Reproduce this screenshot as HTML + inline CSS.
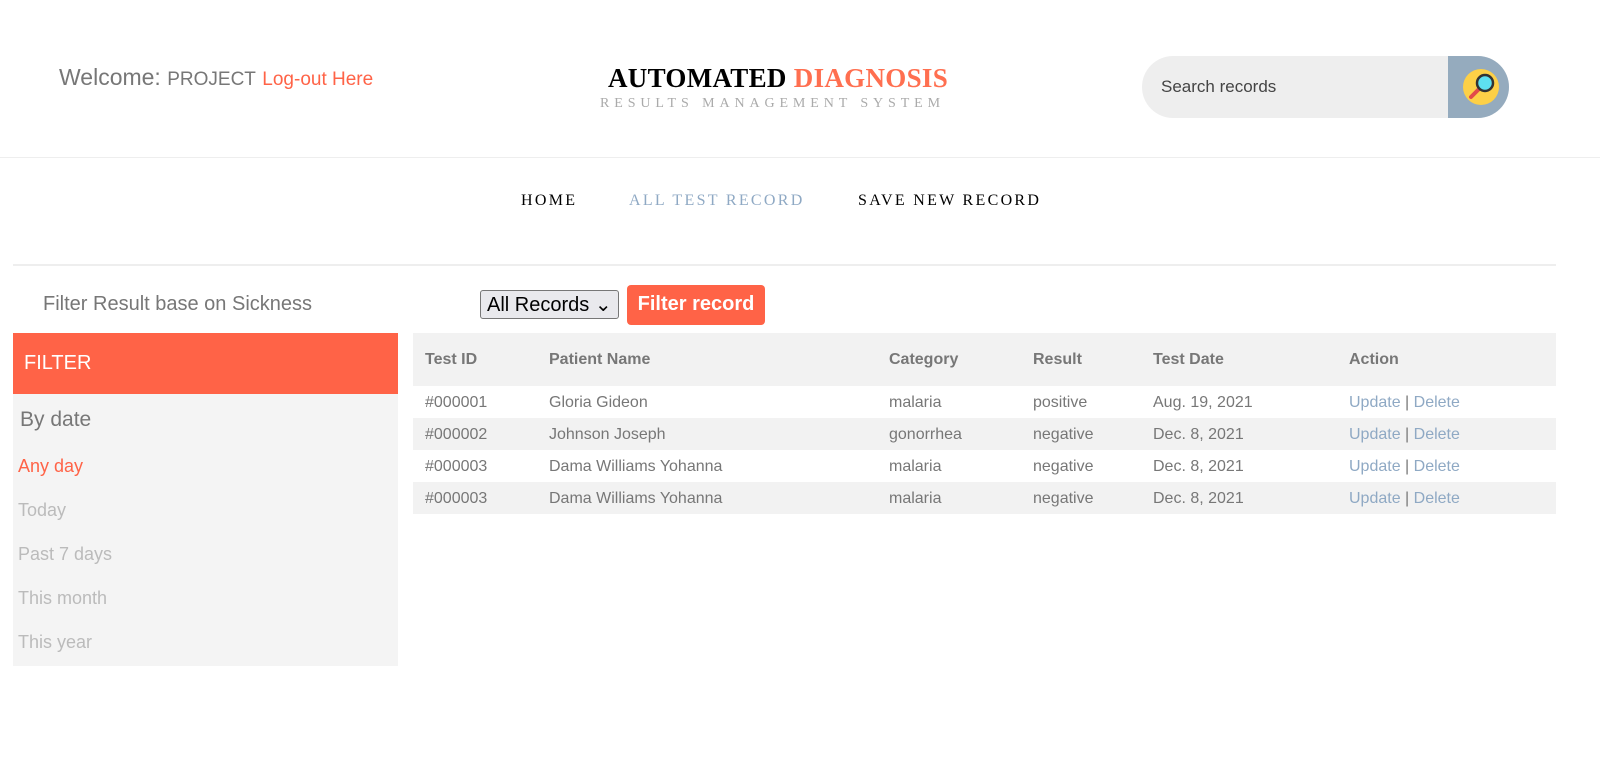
<!DOCTYPE html>
<html><head><style>
body{margin:0;width:1600px;height:757px;background:#fff;font-family:"Liberation Sans",sans-serif;position:relative;overflow:hidden}
.a{position:absolute;white-space:nowrap}
table{border-collapse:collapse;position:absolute;left:413px;top:333px;width:1143px;font-size:16px;color:#777}
td,th{padding:0 0 0 12px;text-align:left}
th{height:53px;font-weight:bold}
td{height:30px;padding-top:2px}
tr.g{background:#f2f2f2}
.l{color:#8fa9c4}
</style></head><body>
<div class="a" style="left:59px;top:64px;font-size:23px;color:#777">Welcome: <span style="font-size:19px">PROJECT</span> <span style="font-size:19px;color:#ff6347">Log-out Here</span></div>
<div class="a" style="left:608px;top:63px;font-family:'Liberation Serif',serif;font-weight:bold;font-size:27px;letter-spacing:0.3px;color:#000">AUTOMATED <span style="color:#ff6f50">DIAGNOSIS</span></div>
<div class="a" style="left:600px;top:96px;font-family:'Liberation Serif',serif;font-size:14px;letter-spacing:4.9px;color:#aaa">RESULTS MANAGEMENT SYSTEM</div>
<div class="a" style="left:1142px;top:56px;width:367px;height:62px;border-radius:31px;background:#eee;overflow:hidden">
<div class="a" style="left:19px;top:21px;font-size:17px;color:#444">Search records</div>
<div class="a" style="left:306px;top:0;width:61px;height:62px;background:#95abbe"></div>
<svg class="a" style="left:320px;top:12px" width="38" height="38" viewBox="0 0 38 38"><circle cx="19" cy="19" r="18" fill="#fdd047"/><line x1="9" y1="29" x2="17" y2="21" stroke="#e24a4a" stroke-width="4" stroke-linecap="round"/><circle cx="23" cy="15" r="8" fill="#5ee0f0" stroke="#333" stroke-width="2.5"/></svg>
</div>
<div class="a" style="left:0;top:157px;width:1600px;border-top:1px solid #eee"></div>
<div class="a" style="left:521px;top:192px;font-family:'Liberation Serif',serif;font-size:16px;letter-spacing:2.3px;color:#000">HOME</div>
<div class="a" style="left:629px;top:192px;font-family:'Liberation Serif',serif;font-size:16px;letter-spacing:2.3px;color:#8fa9c4">ALL TEST RECORD</div>
<div class="a" style="left:858px;top:192px;font-family:'Liberation Serif',serif;font-size:16px;letter-spacing:2.3px;color:#000">SAVE NEW RECORD</div>
<div class="a" style="left:13px;top:264px;width:1543px;border-top:2px solid #eee"></div>
<div class="a" style="left:43px;top:293px;font-size:20px;color:#777">Filter Result base on Sickness</div>
<div class="a" style="left:480px;top:290px;width:139px;height:29px;border:1px solid #777;border-radius:3px;background:#e9e9ed;font-size:20px;line-height:29px;padding-left:6px;box-sizing:border-box">All Records ⌄</div>
<div class="a" style="left:627px;top:285px;width:138px;height:40px;border-radius:4px;background:#ff6347;color:#fff;font-weight:bold;font-size:20px;line-height:38px;text-align:center">Filter record</div>
<div class="a" style="left:13px;top:333px;width:385px;height:333px;background:#f4f4f4"></div>
<div class="a" style="left:13px;top:333px;width:385px;height:61px;background:#ff6347;color:#fff;font-size:20px;line-height:61px;padding-left:11px;box-sizing:border-box">FILTER</div>
<div class="a" style="left:20px;top:408px;font-size:21px;color:#777">By date</div>
<div class="a" style="left:18px;top:456px;font-size:18px;color:#ff6347">Any day</div>
<div class="a" style="left:18px;top:500px;font-size:18px;color:#bbb">Today</div>
<div class="a" style="left:18px;top:544px;font-size:18px;color:#bbb">Past 7 days</div>
<div class="a" style="left:18px;top:588px;font-size:18px;color:#bbb">This month</div>
<div class="a" style="left:18px;top:632px;font-size:18px;color:#bbb">This year</div>
<table>
<tr class="g"><th style="width:112px">Test ID</th><th style="width:328px">Patient Name</th><th style="width:132px">Category</th><th style="width:108px">Result</th><th style="width:184px">Test Date</th><th>Action</th></tr>
<tr><td>#000001</td><td>Gloria Gideon</td><td>malaria</td><td>positive</td><td>Aug. 19, 2021</td><td><span class="l">Update</span> | <span class="l">Delete</span></td></tr>
<tr class="g"><td>#000002</td><td>Johnson Joseph</td><td>gonorrhea</td><td>negative</td><td>Dec. 8, 2021</td><td><span class="l">Update</span> | <span class="l">Delete</span></td></tr>
<tr><td>#000003</td><td>Dama Williams Yohanna</td><td>malaria</td><td>negative</td><td>Dec. 8, 2021</td><td><span class="l">Update</span> | <span class="l">Delete</span></td></tr>
<tr class="g"><td>#000003</td><td>Dama Williams Yohanna</td><td>malaria</td><td>negative</td><td>Dec. 8, 2021</td><td><span class="l">Update</span> | <span class="l">Delete</span></td></tr>
</table>
</body></html>
